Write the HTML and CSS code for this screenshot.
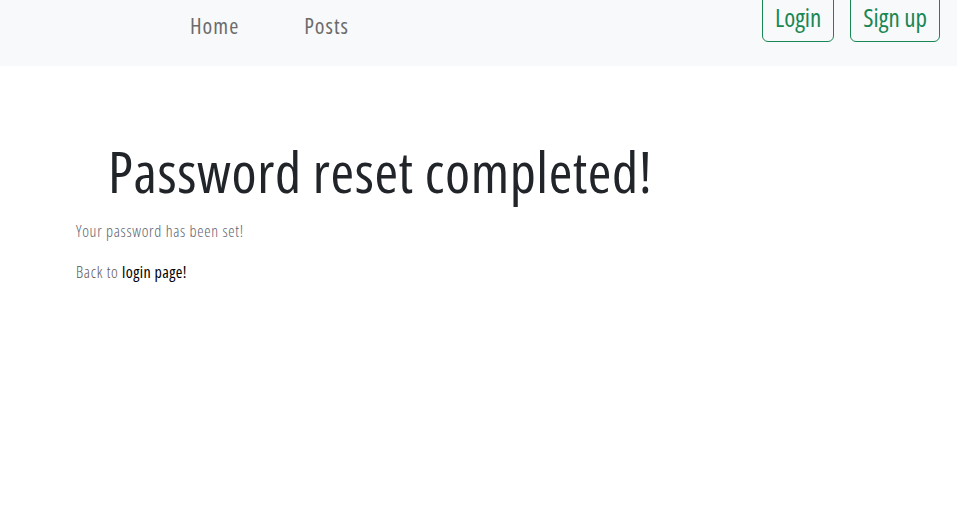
FILE: index.html
```html
<!DOCTYPE html>
<html lang="en">
<head>
<meta charset="utf-8">
<title>Password reset completed</title>
<link rel="stylesheet" href="styles.css">
</head>
<body>
<nav class="navbar">
  <ul class="nav-links">
    <li><a href="#" class="nav-link">Home</a></li>
    <li><a href="#" class="nav-link">Posts</a></li>
  </ul>
  <div class="auth">
    <a href="#" class="btn-outline">Login</a>
    <a href="#" class="btn-outline">Sign up</a>
  </div>
</nav>
<main class="content">
  <h1 class="title">Password reset completed!</h1>
  <p class="msg">Your password has been set!</p>
  <p class="msg back">Back to <a href="#" class="login-link">login page!</a></p>
</main>
</body>
</html>
```
FILE: styles.css
```css
* { box-sizing: border-box; }
body {
  margin: 0;
  font-family: "Open Sans", sans-serif;
  font-stretch: 75%;
  background: #fff;
  color: #212529;
}
.navbar {
  display: flex;
  align-items: flex-start;
  height: 66px;
  background: #f8f9fa;
}
.nav-links {
  display: flex;
  gap: 65px;
  list-style: none;
  margin: 0 0 0 190px;
  padding: 7px 0 0;
}
.nav-link {
  font-size: 22px;
  letter-spacing: 1px;
  line-height: 36px;
  color: #6b6b6b;
  text-decoration: none;
}
.auth {
  display: flex;
  gap: 16px;
  margin-left: auto;
  margin-right: 17px;
  margin-top: -8px;
}
.btn-outline {
  display: block;
  font-size: 25px;
  line-height: 34px;
  padding: 7px 12px 7px;
  border: 1px solid #198754;
  border-radius: 6px;
  color: #198754;
  text-decoration: none;
}
.content {
  padding: 0 0 0 76px;
}
.title {
  margin: 71px 0 14px 32px;
  font-size: 57px;
  letter-spacing: 0.6px;
  font-weight: 500;
  line-height: 1.2;
  color: #212529;
}
.msg {
  margin: 0 0 17px;
  font-size: 16px;
  letter-spacing: 0.7px;
  line-height: 24px;
  font-weight: 300;
  color: #5a6270;
}
.back { color: #5c564e; }
.login-link {
  color: #000;
  font-weight: 500;
  letter-spacing: 0.4px;
  text-decoration: none;
}
```
